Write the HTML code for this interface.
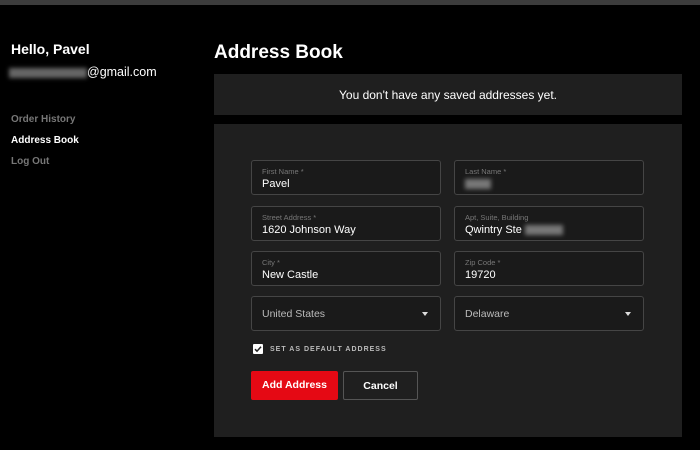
<!DOCTYPE html><html><head><style>
body{margin:0;width:700px;height:450px;background:#000;font-family:"Liberation Sans",sans-serif;position:relative;overflow:hidden;color:#fff}
.a{position:absolute}
.f{position:absolute;border:1px solid #454545;border-radius:3px;background:#1a1a1a;box-sizing:border-box;width:190px;height:35px}
.f .l{position:absolute;left:10px;top:6px;font-size:7.5px;color:#777}
.f .v{position:absolute;left:10px;top:17px;font-size:11px;color:#fff}
.s .v{top:11px;color:#bbb;font-size:10.5px}
.s .c{position:absolute;right:12px;top:15px;width:0;height:0;border-left:3.5px solid transparent;border-right:3.5px solid transparent;border-top:4px solid #ddd}
.blur{display:inline-block;background:#888;filter:blur(2px);height:10px;vertical-align:middle}
</style></head><body>
<div class="a" style="left:0;top:0;width:700px;height:5px;background:#3c3c3c"></div>
<div class="a" style="left:11px;top:41px;font-size:14px;font-weight:bold">Hello, Pavel</div>
<div class="a" style="left:9px;top:65px;font-size:12.5px"><span class="blur" style="width:78px;background:#666"></span>@gmail.com</div>
<div class="a" style="left:11px;top:114px;font-size:10px;font-weight:bold;color:#777">Order History</div>
<div class="a" style="left:11px;top:135px;font-size:10px;font-weight:bold;color:#fff">Address Book</div>
<div class="a" style="left:11px;top:156px;font-size:10px;font-weight:bold;color:#777">Log Out</div>
<div class="a" style="left:214px;top:42px;font-size:19px;font-weight:bold">Address Book</div>
<div class="a" style="left:214px;top:74px;width:468px;height:41px;background:#1f1f1f;text-align:center;line-height:42px;font-size:12px">You don't have any saved addresses yet.</div>
<div class="a" style="left:214px;top:124px;width:468px;height:313px;background:#1f1f1f"></div>
<div class="f" style="left:251px;top:160px"><div class="l">First Name *</div><div class="v">Pavel</div></div>
<div class="f" style="left:454px;top:160px"><div class="l">Last Name *</div><div class="v"><span class="blur" style="width:26px;background:#777"></span></div></div>
<div class="f" style="left:251px;top:206px"><div class="l">Street Address *</div><div class="v">1620 Johnson Way</div></div>
<div class="f" style="left:454px;top:206px"><div class="l">Apt, Suite, Building</div><div class="v">Qwintry Ste <span class="blur" style="width:38px;background:#777"></span></div></div>
<div class="f" style="left:251px;top:251px"><div class="l">City *</div><div class="v">New Castle</div></div>
<div class="f" style="left:454px;top:251px"><div class="l">Zip Code *</div><div class="v">19720</div></div>
<div class="f s" style="left:251px;top:296px"><div class="v">United States</div><div class="c"></div></div>
<div class="f s" style="left:454px;top:296px"><div class="v">Delaware</div><div class="c"></div></div>
<div class="a" style="left:253px;top:344px;width:10px;height:10px;background:#fff;border-radius:1px"><svg width="10" height="10" style="display:block"><path d="M2 5.2L4 7.2L8 2.8" stroke="#222" stroke-width="1.5" fill="none"/></svg></div>
<div class="a" style="left:270px;top:346px;font-size:7px;font-weight:bold;letter-spacing:1px;color:#bbb">SET AS DEFAULT ADDRESS</div>
<div class="a" style="left:251px;top:371px;width:87px;height:29px;background:#e50914;border-radius:2px;text-align:center;line-height:29px;font-size:10.5px;font-weight:bold">Add Address</div>
<div class="a" style="left:343px;top:371px;width:75px;height:29px;box-sizing:border-box;border:1px solid #555;border-radius:2px;text-align:center;line-height:28px;font-size:10.5px;font-weight:bold">Cancel</div>
</body></html>
